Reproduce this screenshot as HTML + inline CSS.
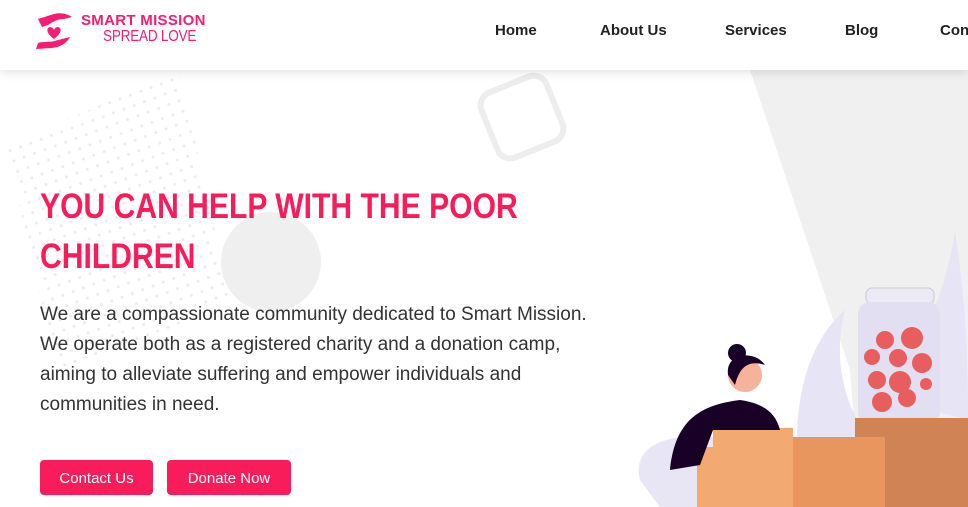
<!DOCTYPE html>
<html><head><meta charset="utf-8"><style>
*{margin:0;padding:0;box-sizing:border-box}
body{width:968px;height:507px;overflow:hidden;background:#fff;font-family:"Liberation Sans",sans-serif;position:relative}
.hdr{position:absolute;left:0;top:0;width:968px;height:70px;background:#fff;box-shadow:0 2px 10px rgba(0,0,0,.12);z-index:5}
.nav a{position:absolute;top:22px;font-size:15px;font-weight:bold;color:#222;text-decoration:none}
.h1{position:absolute;left:40px;top:182px;color:#f81c5a;font-weight:bold;font-size:35px;line-height:50px;transform-origin:0 0;transform:scaleX(.86);white-space:nowrap}
.p{position:absolute;left:40px;top:300px;width:620px;font-size:19px;line-height:30px;color:#333;white-space:nowrap}
.btn{position:absolute;top:460px;height:35px;background:#f81c5a;color:#fff;font-size:15px;line-height:37px;text-align:center;border-radius:4px}
</style></head><body>
<svg style="position:absolute;left:0;top:0" width="968" height="507">
<polygon points="750,70 968,70 968,507 860,507 850,370" fill="#f0f0f0"/>
<pattern id="d" width="11" height="11" patternUnits="userSpaceOnUse" patternTransform="rotate(-20)"><circle cx="2" cy="2" r="1.5" fill="#ececec"/></pattern>
<polygon points="5,145 180,72 230,300 60,380" fill="url(#d)"/>
<circle cx="271" cy="262" r="50" fill="#efefef"/>
<rect x="487" y="82" width="70" height="70" rx="14" fill="none" stroke="#ededed" stroke-width="6" transform="rotate(-22 522 117)"/>
<path d="M800,507 C790,420 800,350 845,310 C830,370 850,420 880,450 Z" fill="#e6e4f5"/>
<path d="M895,400 C920,340 945,300 955,230 C965,300 968,350 968,420 Z" fill="#e6e4f5"/>
<path d="M640,480 C630,440 680,430 730,440 L740,507 L660,507 Z" fill="#e8e6f4"/>
<rect x="866" y="288" width="68" height="16" rx="6" fill="#ecebf5" stroke="#c9c7dc"/>
<rect x="858" y="302" width="82" height="122" rx="12" fill="#e2dff3"/>
<g fill="#e85d5d">
<circle cx="885" cy="340" r="9"/><circle cx="912" cy="338" r="11"/><circle cx="872" cy="357" r="8"/><circle cx="898" cy="358" r="9"/><circle cx="922" cy="363" r="10"/><circle cx="877" cy="380" r="9"/><circle cx="900" cy="382" r="11"/><circle cx="926" cy="384" r="6"/><circle cx="882" cy="402" r="10"/><circle cx="907" cy="398" r="9"/>
</g>
<rect x="855" y="418" width="113" height="89" fill="#d08455"/>
<rect x="790" y="437" width="95" height="70" fill="#e8955e"/>
<rect x="713" y="428" width="80" height="79" fill="#f3aa72"/>
<rect x="697" y="447" width="30" height="60" fill="#f3aa72"/>
<path d="M670,470 C675,420 700,405 740,400 C760,403 775,410 780,430 L713,430 L700,465 Z" fill="#180026"/>
<circle cx="745" cy="375" r="17" fill="#f6b39a"/>
<path d="M728,375 C725,352 755,350 765,365 C750,360 740,365 735,385 Z" fill="#180026"/>
<circle cx="737" cy="353" r="9" fill="#180026"/>
</svg>
<div class="hdr">
<svg style="position:absolute;left:34px;top:11px" width="40" height="40" viewBox="0 0 40 40">
<path d="M4,8 L20,3 C26,1 34,3 38,6 L30,8 C24,8 20,10 14,14 L8,16 Z" fill="#f81c72"/>
<path d="M2,38 L4,32 C10,30 16,32 24,29 L36,26 C32,33 26,36 18,37 Z" fill="#f81c72"/>
<path d="M20,28 C12,22 12,17 16,16 C18,16 20,18 20,19 C20,18 22,16 24,16 C28,17 28,22 20,28Z" fill="#f81c72"/>
</svg>
<div style="position:absolute;left:81px;top:12px;font-size:15px;font-weight:bold;color:#f81c72;letter-spacing:.3px">SMART MISSION</div>
<div style="position:absolute;left:103px;top:28px;font-size:16px;color:#f81c72;transform:scaleX(.85);transform-origin:0 0;letter-spacing:-.3px">SPREAD LOVE</div>
<div class="nav"><a style="left:495px">Home</a><a style="left:600px">About Us</a><a style="left:725px">Services</a><a style="left:845px">Blog</a><a style="left:940px">Contact</a></div>
</div>
<div class="h1">YOU CAN HELP WITH THE POOR<br>CHILDREN</div>
<div class="p">We are a compassionate community dedicated to Smart Mission.<br>We operate both as a registered charity and a donation camp,<br>aiming to alleviate suffering and empower individuals and<br>communities in need.</div>
<div class="btn" style="left:40px;width:113px">Contact Us</div>
<div class="btn" style="left:167px;width:124px">Donate Now</div>
</body></html>
